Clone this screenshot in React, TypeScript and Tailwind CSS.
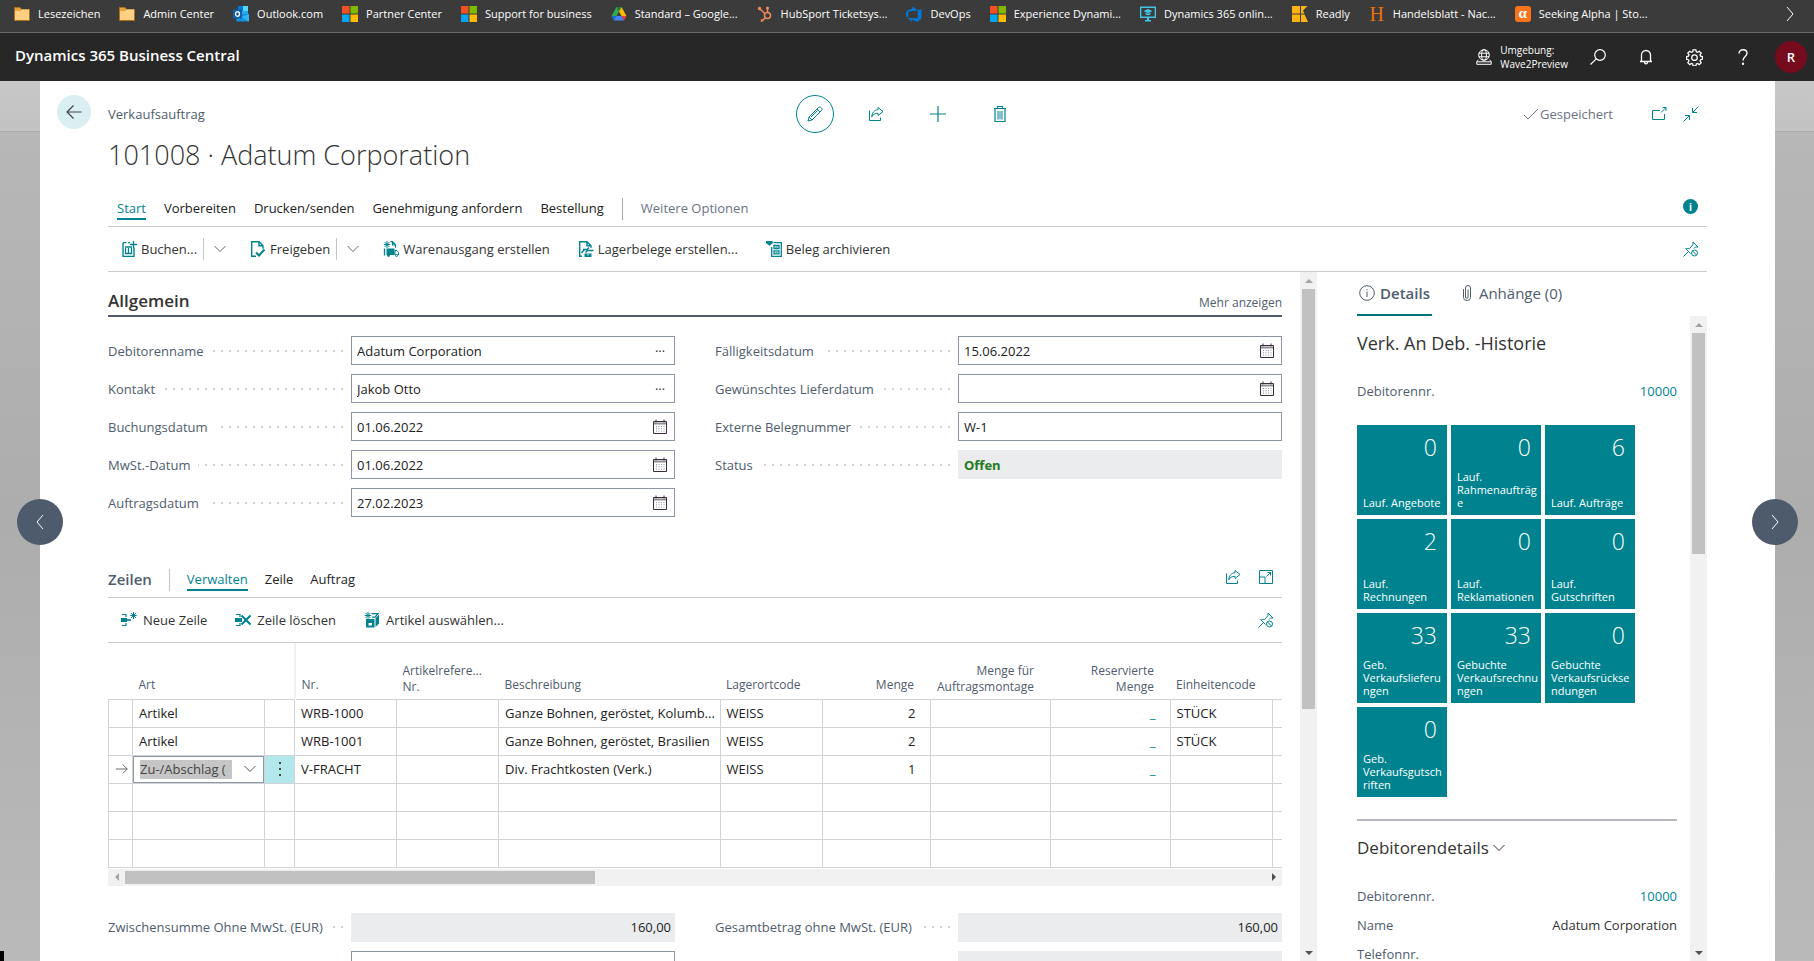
import React from "react";

type P = { className?: string };

function Svg({ className = "size-4", vb = 16, sw = 1, children }: { className?: string; vb?: number; sw?: number; children: React.ReactNode }) {
  return (
    <svg viewBox={`0 0 ${vb} ${vb}`} className={"shrink-0 " + className} fill="none" stroke="currentColor" strokeWidth={sw} aria-hidden="true">
      {children}
    </svg>
  );
}

/* ---------- bookmark icons ---------- */
const Folder = () => (
  <Svg>
    <path d="M.5 1.500h5.500l1.500 2h8v11H.5z" fill="#e8a33d" stroke="#a8741c" />
    <path d="M1 5h5l1.600-1.500H15V14H1z" fill="#ffd083" stroke="none" />
  </Svg>
);
const Outlook = () => (
  <Svg>
    <path d="M5 0h10v10H5z" fill="#28a8ea" stroke="none" />
    <path d="M10 0h5v5h-5z" fill="#50d9ff" stroke="none" />
    <path d="M5 0h5v5H5z" fill="#0078d4" stroke="none" />
    <path d="M3.500 8l12.500 0v7.500H3.500z" fill="#1490df" stroke="none" />
    <path d="M16 8v7.500L8 11z" fill="#32b6f2" stroke="none" />
    <path d="M0 3.500h9v9H0z" fill="#0f5ca8" stroke="none" />
    <ellipse cx="4.500" cy="8" rx="2" ry="2.300" stroke="#fff" strokeWidth="1.300" />
  </Svg>
);
const Ms = () => (
  <Svg>
    <g stroke="none">
      <path d="M0 0h7.500v7.500H0z" fill="#f25022" />
      <path d="M8.500 0H16v7.500H8.500z" fill="#7fba00" />
      <path d="M0 8.500h7.500V16H0z" fill="#00a4ef" />
      <path d="M8.500 8.500H16V16H8.500z" fill="#ffb900" />
    </g>
  </Svg>
);
const Drive = () => (
  <Svg>
    <g stroke="none">
      <path d="M5.500 1h5L8 5.500z" fill="#188038" />
      <path d="M5.500 1L.5 10l2.500 4.500 5-9z" fill="#34a853" />
      <path d="M10.500 1l5 9h-5L8 5.500z" fill="#fbbc04" />
      <path d="M3 14.500L5.500 10H.5z" fill="#1967d2" />
      <path d="M5.500 10h5l2.500 4.500H3z" fill="#4285f4" />
      <path d="M10.500 10h5L13 14.500z" fill="#ea4335" />
    </g>
  </Svg>
);
const Hub = () => (
  <Svg sw={1.5}>
    <g stroke="#f08a5d">
      <circle cx="10.500" cy="9.500" r="3" />
      <path d="M10.500 6.500V3M8 7.700L3 3M8.300 11.800L5.500 14.500" />
      <circle cx="2.500" cy="2.500" r="1" fill="#f08a5d" />
      <circle cx="10.500" cy="2" r=".8" fill="#f08a5d" />
      <circle cx="5" cy="14.600" r=".6" fill="#f08a5d" />
    </g>
  </Svg>
);
const DevOps = () => (
  <Svg>
    <path d="M15.500 3v9.500L11.500 16 5.500 13.600V16L2 11.800l9.700.8V4.200zM11.800 4.200L6.300.5v2.300L1.500 4.300 0 6.200v4.400l2.200.9V5.800z" fill="#0078d4" stroke="none" />
  </Svg>
);
const Monitor = () => (
  <Svg>
    <path d="M.7 1.200h14.600v10H.7z" stroke="#45c3e8" strokeWidth="1.400" />
    <path d="M8 3l4.500 2L8 7.200 3.500 5z" fill="#45c3e8" stroke="none" />
    <path d="M5.500 6.500v2c1.500 1 3.500 1 5 0v-2L8 7.700z" fill="#45c3e8" stroke="none" />
    <path d="M7 11h2v3H7zM5 14h6v1.500H5z" fill="#45c3e8" stroke="none" />
  </Svg>
);
const Readly = () => (
  <Svg>
    <path d="M0 0h8v7.500H0zM0 8.500h8V16H0zM9 0h6.500L11 4.500 12.500 7.500H9zM9 8.500h3.500L16 16H9z" fill="#fcb415" stroke="none" />
  </Svg>
);
const Handels = () => <span className="w-4 text-center font-['Liberation_Serif',serif] text-[20px] leading-4 text-[#e8730c]">H</span>;
const Alpha = () => <span className="flex size-4 items-center justify-center rounded-[3px] bg-[#f9731a] pb-0.5 font-['Liberation_Serif',serif] text-[15px] font-bold leading-4 text-white">α</span>;

/* ---------- app icons ---------- */
const ChevR = ({ className }: P) => <Svg className={className}><path d="M5 1l6 7-6 7" /></Svg>;
const ChevL = ({ className }: P) => <Svg className={className}><path d="M11 1L5 8l6 7" /></Svg>;
const ChevD = ({ className }: P) => <Svg className={className}><path d="M2.500 5L8 10.500 13.500 5" /></Svg>;
const ArrowL = ({ className }: P) => <Svg className={className} sw={1.2}><path d="M15.500 8H1M7.500 1.500L1 8l6.500 6.500" /></Svg>;
const ArrowR = ({ className }: P) => <Svg className={className}><path d="M1 8h13M9 3l5 5-5 5" /></Svg>;
const Pencil = ({ className }: P) => (
  <Svg className={className}><path d="M1 15l1-4L11.500 1.500c.7-.7 1.800-.7 2.500 0l.5.500c.7.700.7 1.800 0 2.500L5 14zM2 11l3 3M10 3l3 3M4 11l6.500-6.500" /></Svg>
);
const Share = ({ className }: P) => (
  <Svg className={className}><path d="M1.500 4.500v10h11v-3M10 1.500l5 4-5 4V7.300C7 7.200 5 8.300 3.700 11 4 6.500 6.500 4 10 3.800z" /></Svg>
);
const Plus = ({ className }: P) => <Svg className={className} sw={1.2}><path d="M8 0v16M0 8h16" /></Svg>;
const Trash = ({ className }: P) => (
  <Svg className={className}>
    <path d="M2 2.500h12M5.500 2.500v-2h5v2M3 2.500v13h10v-13" strokeWidth="1.200" />
    <path d="M5 5h6v8.500H5z" fill="#7fc1c5" stroke="none" />
  </Svg>
);
const Check = ({ className }: P) => <Svg className={className}><path d="M1 9l4 4L15 3" /></Svg>;
const PopOut = ({ className }: P) => <Svg className={className}><path d="M9 4.500H1.500v9h12V8M10 6.500l5-5M11.500 1.500H15V5" /></Svg>;
const Shrink = ({ className }: P) => <Svg className={className}><path d="M15.500.5l-6 6M9.500 2v4.500H14M.5 15.500l6-6M2 9.500h4.500V14" /></Svg>;
const Pin = ({ className }: P) => (
  <Svg className={className}>
    <path d="M.5 15.500l5-5M2.500 7.500l5 5M3 8c1.300-.7 2.400-.7 3.500-.3L10 3.500V1l5 5h-2.500L11 7.500" />
    <circle cx="11.500" cy="12" r="3" />
    <path d="M9.500 10l4 4" />
  </Svg>
);
const Expand = ({ className }: P) => <Svg className={className}><path d="M1.500 8V1.500h13v13H1.500V8H7v6.500M8.500 7.500l4-4M9.500 3.500h3v3" /></Svg>;
const Calendar = ({ className }: P) => (
  <Svg className={className}>
    <path d="M1.500 2.500h13v12h-13zM4 .5v3M12 .5v3" stroke="#3b2b3f" />
    <path d="M2 3.500h12v2H2z" fill="#8f8f93" stroke="none" />
    <path d="M4.500 7v6M7 7v6M9.500 7v6M12 7v6" stroke="#8d97a3" strokeDasharray="1 1.300" />
  </Svg>
);
const Star = () => <path d="M4 0v7M.8 3.500h6.400M1.600 1l4.800 5M6.400 1L1.600 6" strokeWidth="1" />;
const Post = () => (
  <Svg><path d="M2 2v13.400h11V6.500M2 1.600h3.500M7 1.600h2" strokeWidth="1.400" /><path d="M4.500 7v6M7.500 7v6M10.500 7v6M4 6h7M4 12.500h7M9 3.500h7M12.500 0v7" strokeWidth="1.300" /></Svg>
);
const Release = () => (
  <Svg><path d="M6 15.300H1.700V.7H9l4 4v3M9 .7v4h4" strokeWidth="1.400" /><path d="M6 11.500l3 3 5.500-6" strokeWidth="2" /></Svg>
);
const Shipment = () => (
  <Svg>
    <Star /><path d="M7.500.7h2l3 3v3M9.500 1v3h3" strokeWidth="1.200" /><path d="M1.500 7.500v7" strokeWidth="1.300" />
    <path d="M3.500 7.500h8v6.500h-8z" fill="currentColor" stroke="none" /><path d="M12 9.500h2l1.500 2V14H12z" />
    <circle cx="5.500" cy="14.500" r="1" fill="currentColor" /><circle cx="13.500" cy="14.500" r="1" fill="#fff" />
  </Svg>
);
const WhseDoc = () => (
  <Svg><path d="M4 15.300H1.700V.7H9l4 4v2M9 .7v4h4" strokeWidth="1.400" /><path d="M5 8.500h4l2-2M15.500 9.500h-6l-2 2M3.500 12l3-3.500" strokeWidth="1.400" /><path d="M6.500 12.500h7V16h-7z" fill="currentColor" stroke="none" /><path d="M10 13v1.500" stroke="#fff" /></Svg>
);
const Archive = () => (
  <Svg><path d="M0 .5h6.500M1 2l2.500 2L6 2z" strokeWidth="1.300" fill="currentColor" /><path d="M5.700 6v9.300h9.600V1.700H7.500M8 4.500h5v3H8zM8 9.800h5v3H8z" strokeWidth="1.300" /><path d="M9.500 6h2M9.500 11.300h2" /></Svg>
);
const NewLine = () => (
  <Svg><path d="M1 2.500h4v2.500M1 13.500h4v-2.500" strokeWidth="1.200" /><path d="M0 6h6v4H0z" fill="currentColor" stroke="none" /><path d="M6 8h4" strokeWidth="1.600" /><g transform="translate(8.500 0)"><Star /></g></Svg>
);
const DelLine = () => (
  <Svg><path d="M1 2.500h4v2.500M1 13.500h4v-2.500" strokeWidth="1.200" /><path d="M0 6h7v4H0z" fill="currentColor" stroke="none" /><path d="M6.500 3.500l9 9M15.500 3.500l-9 9" strokeWidth="2" /></Svg>
);
const PickItem = () => (
  <Svg>
    <path d="M2 7h8.500v8.500H2zM11.500 6L15 2.500v9L11.500 15z" fill="currentColor" stroke="none" />
    <path d="M7.500 1.700H14l-3 3.500H8" strokeWidth="1.300" /><path d="M4.500 11h3.500v2.500H4.500z" fill="#fff" stroke="none" /><Star />
  </Svg>
);
const Globe = ({ className }: P) => (
  <Svg className={className}><circle cx="8" cy="6" r="5.300" /><ellipse cx="8" cy="6" rx="2.400" ry="5.300" /><path d="M2.700 4.200h10.600M2.700 7.800h10.600M2.500 11L.8 12.500v2.800h14.400v-2.800L13.500 11M.8 12.800h14.400" /></Svg>
);
const Search = ({ className }: P) => <Svg className={className} sw={1.2}><circle cx="10" cy="6" r="5.300" /><path d="M6.200 9.800L.5 15.500" /></Svg>;
const Bell = ({ className }: P) => <Svg className={className} sw={1.3}><path d="M2 12.500h12M3.500 12.500V6a4.500 4.500 0 019 0v6.500M6.500 13c0 2.500 3 2.500 3 0" /></Svg>;
const Gear = ({ className }: P) => (
  <Svg className={className} sw={1.2}>
    <path d="M6.700.8h2.600l.4 1.900 1.200.5 1.600-1.100 1.800 1.800-1.100 1.600.5 1.200 1.700.4v2.600l-1.700.4-.5 1.200 1.100 1.600-1.800 1.800-1.600-1.100-1.200.5-.4 1.900H6.700l-.4-1.900-1.200-.5-1.600 1.100-1.800-1.800 1.100-1.600-.5-1.200-1.700-.4V7.100l1.700-.4.500-1.200-1.100-1.600 1.800-1.800 1.600 1.100 1.200-.5z" />
    <circle cx="8" cy="8.200" r="2.600" />
  </Svg>
);
const Question = ({ className }: P) => <Svg className={className} sw={1.4}><path d="M4 4.500C4 2 5.800.8 8 .8s4 1.400 4 3.500C12 7.500 8 7.500 8 11.500" /><circle cx="8" cy="14.800" r=".5" fill="currentColor" /></Svg>;
const InfoO = ({ className }: P) => <Svg className={className}><circle cx="8" cy="8" r="7.300" /><path d="M8 6.500V12M8 4v1.200" /></Svg>;
const Clip = ({ className }: P) => <Svg className={className}><path d="M4.500 4v8.500a3.500 3 0 007 0V3a2.500 2.500 0 00-5 0v9a1.300 1.300 0 002.600 0V4.500" /></Svg>;
const Tri = ({ className }: P) => <Svg className={className} vb={8}><path d="M0 6l4-4 4 4z" fill="currentColor" stroke="none" /></Svg>;

/* ---------- data ---------- */
const bookmarks: [React.ReactNode, string][] = [
  [<Folder />, "Lesezeichen"],
  [<Folder />, "Admin Center"],
  [<Outlook />, "Outlook.com"],
  [<Ms />, "Partner Center"],
  [<Ms />, "Support for business"],
  [<Drive />, "Standard – Google..."],
  [<Hub />, "HubSport Ticketsys..."],
  [<DevOps />, "DevOps"],
  [<Ms />, "Experience Dynami..."],
  [<Monitor />, "Dynamics 365 onlin..."],
  [<Readly />, "Readly"],
  [<Handels />, "Handelsblatt - Nac..."],
  [<Alpha />, "Seeking Alpha | Sto..."],
];

type Kind = "lookup" | "date" | "text" | "status" | "total";
type FieldDef = { id: string; label: string; value: string; kind: Kind };
const leftFields: FieldDef[] = [
  { id: "deb", label: "Debitorenname", value: "Adatum Corporation", kind: "lookup" },
  { id: "kon", label: "Kontakt", value: "Jakob Otto", kind: "lookup" },
  { id: "buch", label: "Buchungsdatum", value: "01.06.2022", kind: "date" },
  { id: "mwst", label: "MwSt.-Datum", value: "01.06.2022", kind: "date" },
  { id: "auf", label: "Auftragsdatum", value: "27.02.2023", kind: "date" },
];
const rightFields: FieldDef[] = [
  { id: "fael", label: "Fälligkeitsdatum", value: "15.06.2022", kind: "date" },
  { id: "lief", label: "Gewünschtes Lieferdatum", value: "", kind: "date" },
  { id: "ext", label: "Externe Belegnummer", value: "W-1", kind: "text" },
  { id: "stat", label: "Status", value: "Offen", kind: "status" },
];
const lines = [
  ["Artikel", "WRB-1000", "Ganze Bohnen, geröstet, Kolumb...", "WEISS", "2", "STÜCK"],
  ["Artikel", "WRB-1001", "Ganze Bohnen, geröstet, Brasilien", "WEISS", "2", "STÜCK"],
  ["Zu-/Abschlag (", "V-FRACHT", "Div. Frachtkosten (Verk.)", "WEISS", "1", ""],
  null,
  null,
  null,
];
const tiles: [string, string][] = [
  ["0", "Lauf. Angebote"],
  ["0", "Lauf.\nRahmenaufträg\ne"],
  ["6", "Lauf. Aufträge"],
  ["2", "Lauf.\nRechnungen"],
  ["0", "Lauf.\nReklamationen"],
  ["0", "Lauf.\nGutschriften"],
  ["33", "Geb.\nVerkaufslieferu\nngen"],
  ["33", "Gebuchte\nVerkaufsrechnu\nngen"],
  ["0", "Gebuchte\nVerkaufsrückse\nndungen"],
  ["0", "Geb.\nVerkaufsgutsch\nriften"],
];

/* ---------- parts ---------- */
function Field({ f }: { f: FieldDef }) {
  const filled = f.kind === "status" || f.kind === "total";
  return (
    <div className="flex h-[29px] items-center">
      <div className="flex w-[243px] shrink-0 items-center gap-2 pr-2">
        <label htmlFor={f.id} className="whitespace-nowrap text-[#505c6d]">{f.label}</label>
        <span className="h-0.5 flex-1 bg-[repeating-linear-gradient(to_left,#d4d4d4_0_2px,transparent_2px_8px)]" />
      </div>
      <div className={"flex h-full min-w-0 flex-1 items-center " + (filled ? "bg-[#ebecee]" : "border border-[#8e95a5]")}>
        <input
          id={f.id}
          defaultValue={f.value}
          readOnly={filled}
          className={
            "h-full w-full min-w-0 bg-transparent outline-none " +
            (f.kind === "status" ? "px-1.5 font-bold text-[#217a21]" : f.kind === "total" ? "px-1 text-right text-[#212121]" : "px-[5px] text-[#212121]")
          }
        />
        {f.kind === "lookup" && <button aria-label="Auswählen" className="w-7 shrink-0 text-center leading-4 text-[#333]">···</button>}
        {f.kind === "date" && (
          <button aria-label="Kalender" className="flex w-7 shrink-0 justify-center"><Calendar /></button>
        )}
      </div>
    </div>
  );
}

function Action({ icon, label, split, wide }: { icon: React.ReactNode; label: string; split?: boolean; wide?: boolean }) {
  return (
    <div className={"flex items-center " + (split ? "-mr-1.5" : "")}>
      <button className={"flex items-center whitespace-nowrap text-[#333] " + (wide ? "gap-1.5" : "gap-1")}>
        <span className="text-[#00838f]">{icon}</span>
        {label}
      </button>
      {split && (
        <button aria-label="Weitere Aktionen" className="ml-1.5 flex h-[22px] items-center border-l border-[#c4c4c4] pl-2 text-[#666]">
          <ChevD />
        </button>
      )}
    </div>
  );
}

function VScroll({ thumb }: { thumb: string }) {
  return (
    <div className="flex w-[17px] shrink-0 flex-col items-center bg-[#f1f1f1]">
      <div className="flex h-[17px] items-center text-[#a3a3a3]"><Tri className="size-2" /></div>
      <div className={"w-[13px] bg-[#c1c1c1] " + thumb} />
      <div className="mt-auto flex h-[17px] items-center text-[#505050]"><Tri className="size-2 rotate-180" /></div>
    </div>
  );
}

const Tab = ({ label, active }: { label: string; active?: boolean }) => (
  <button className={"whitespace-nowrap border-b-2 leading-5 " + (active ? "border-[#00838f] text-[#00838f]" : "border-transparent text-[#212121]")}>{label}</button>
);

const thBase = "px-1.5 align-bottom text-[12px] font-normal leading-4 text-[#505c6d] ";
const th = thBase + "pb-1.5 ";
const th2 = thBase + "pb-1 ";
const td = "h-7 overflow-hidden whitespace-nowrap border border-[#d2d2d6] py-0 pl-1.5 ";

export default function App() {
  return (
    <div className="flex h-screen flex-col overflow-hidden bg-white font-['Open_Sans','Noto_Sans',sans-serif] text-[13px] leading-5">
      {/* bookmarks bar */}
      <nav className="flex h-[33px] shrink-0 items-center justify-between border-b border-[#6b6b6b] bg-[#3b3b3b] pb-1 pl-3.5 pr-4 text-[11px] text-white">
        <div className="flex gap-[19px]">
          {bookmarks.map(([icon, label]) => (
            <a key={label} href="#" className="flex items-center gap-2 whitespace-nowrap">
              {icon}
              {label}
            </a>
          ))}
        </div>
        <button aria-label="Mehr Lesezeichen"><ChevR className="size-4" /></button>
      </nav>

      {/* app bar */}
      <header className="flex h-12 shrink-0 items-center bg-[#272727] pl-[15px] pr-[7px] text-white">
        <h1 className="flex-1 pb-1 text-[15px] font-semibold">Dynamics 365 Business Central</h1>
        <div className="flex items-center gap-2">
          <Globe />
          <p className="text-[10px] font-medium leading-[14px]">Umgebung:<br />Wave2Preview</p>
        </div>
        <div className="ml-[22px] flex items-center gap-8">
          <button aria-label="Suchen"><Search /></button>
          <button aria-label="Benachrichtigungen"><Bell /></button>
          <button aria-label="Einstellungen"><Gear className="size-[17px]" /></button>
          <button aria-label="Hilfe"><Question /></button>
          <button className="-ml-2 flex size-8 items-center justify-center rounded-full bg-[#750b1c] font-semibold">R</button>
        </div>
      </header>

      {/* backdrop */}
      <div className="relative min-h-0 flex-1 bg-[linear-gradient(to_bottom,#c6c7c6_0,#c1c2c1_50px,#adadad_50px,#adadad_51px,#b6b7b6_51px,#acadac_50%,#bababa_100%)] pl-10 pr-[39px]">
        <main className="flex h-full flex-col bg-white">
          {/* command row */}
          <div className="grid shrink-0 grid-cols-[1fr_auto_1fr] items-center pl-[17px] pr-[68px] pt-[14px]">
            <div className="flex items-center gap-[17px]">
              <button aria-label="Zurück" className="mb-1 flex size-[34px] items-center justify-center rounded-full bg-[#d9eff1] text-[#444]"><ArrowL /></button>
              <span className="text-[#505c6d]">Verkaufsauftrag</span>
            </div>
            <div className="ml-10 flex items-center gap-[46px] text-[#00838f]">
              <button aria-label="Bearbeiten" className="-mr-3 flex size-[38px] items-center justify-center rounded-full border border-[#00838f]"><Pencil /></button>
              <button aria-label="Teilen"><Share /></button>
              <button aria-label="Neu"><Plus /></button>
              <button aria-label="Löschen"><Trash /></button>
            </div>
            <div className="flex items-center justify-end text-[#00838f]">
              <span className="mr-[38px] flex items-center gap-px text-[#6b7380]"><Check />Gespeichert</span>
              <button aria-label="In neuem Fenster öffnen" className="mr-4"><PopOut /></button>
              <button aria-label="Verkleinern" className="mr-2"><Shrink /></button>
            </div>
          </div>

          <div className="flex min-h-0 flex-1 flex-col px-[68px]">
            <h2 className="mt-1 shrink-0 text-[27px] font-light leading-9 text-[#333]">101008 · Adatum Corporation</h2>

            <div className="mt-[25px] flex h-[29px] shrink-0 items-start gap-[18px] border-b border-[#c8cad0] pl-[9px]">
              <Tab label="Start" active />
              <Tab label="Vorbereiten" />
              <Tab label="Drucken/senden" />
              <Tab label="Genehmigung anfordern" />
              <Tab label="Bestellung" />
              <span className="h-[22px] w-px bg-[#a8a8a8]" />
              <button className="whitespace-nowrap leading-5 text-[#6b7380]">Weitere Optionen</button>
              <button aria-label="Info" className="ml-auto mr-[9px] mt-px flex size-[15px] items-center justify-center rounded-full bg-[#00838f] text-[10px] font-bold leading-none text-white">i</button>
            </div>

            <div className="flex h-[45px] shrink-0 items-center gap-7 border-b border-[#c8cad0] pl-[13px]">
              <Action icon={<Post />} label="Buchen..." split />
              <Action icon={<Release />} label="Freigeben" split />
              <Action icon={<Shipment />} label="Warenausgang erstellen" />
              <Action icon={<WhseDoc />} label="Lagerbelege erstellen..." />
              <Action icon={<Archive />} label="Beleg archivieren" />
              <button aria-label="Anheften" className="ml-auto mr-2 text-[#00838f]"><Pin /></button>
            </div>

            <div className="flex min-h-0 flex-1">
              {/* document */}
              <section className="min-w-0 flex-1 overflow-hidden pr-[18px]">
                <div className="flex h-[45px] items-end justify-between border-b-2 border-[#505c6d] pb-1">
                  <h3 className="text-[17px] font-semibold text-[#333]">Allgemein</h3>
                  <button className="text-[12px] leading-4 text-[#505c6d]">Mehr anzeigen</button>
                </div>
                <div className="mt-[19px] grid grid-cols-2 gap-x-10">
                  <div className="flex flex-col gap-[9px]">{leftFields.map((f) => <Field key={f.id} f={f} />)}</div>
                  <div className="flex flex-col gap-[9px]">{rightFields.map((f) => <Field key={f.id} f={f} />)}</div>
                </div>

                <div className="mt-[52px] flex h-[29px] items-start gap-[17px] border-b border-[#c8cad0]">
                  <h3 className="text-[15px] font-semibold text-[#505c6d]">Zeilen</h3>
                  <span className="h-[22px] w-px bg-[#c4c4c4]" />
                  <Tab label="Verwalten" active />
                  <Tab label="Zeile" />
                  <Tab label="Auftrag" />
                  <div className="ml-auto mr-2 flex gap-[17px] text-[#00838f]">
                    <button aria-label="Teilen"><Share /></button>
                    <button aria-label="Maximieren"><Expand /></button>
                  </div>
                </div>
                <div className="flex h-[45px] items-center gap-7 border-b border-[#c8cad0] pl-[13px]">
                  <Action icon={<NewLine />} label="Neue Zeile" wide />
                  <Action icon={<DelLine />} label="Zeile löschen" wide />
                  <Action icon={<PickItem />} label="Artikel auswählen..." wide />
                  <button aria-label="Anheften" className="ml-auto mr-2 text-[#00838f]"><Pin /></button>
                </div>

                <table className="w-full table-fixed border-collapse">
                  <colgroup>
                    <col className="w-6" />
                    <col className="w-[132px]" />
                    <col className="w-[30px]" />
                    <col className="w-[102px]" />
                    <col className="w-[102px]" />
                    <col />
                    <col className="w-[102px]" />
                    <col className="w-[108px]" />
                    <col className="w-[120px]" />
                    <col className="w-[120px]" />
                    <col className="w-[102px]" />
                    <col className="w-[10px]" />
                  </colgroup>
                  <thead>
                    <tr className="h-14 text-left">
                      <th className={th} />
                      <th className={th}>Art</th>
                      <th className={th + "border-r-2 border-r-[#f0f0f0]"} />
                      <th className={th}>Nr.</th>
                      <th className={th2}>Artikelrefere...<br />Nr.</th>
                      <th className={th}>Beschreibung</th>
                      <th className={th}>Lagerortcode</th>
                      <th className={th + "pr-4 text-right"}>Menge</th>
                      <th className={th2 + "pr-4 text-right"}>Menge für Auftragsmontage</th>
                      <th className={th2 + "pr-4 text-right"}>Reservierte<br />Menge</th>
                      <th className={th}>Einheitencode</th>
                      <th className={th} />
                    </tr>
                  </thead>
                  <tbody className="text-[#212121]">
                    {lines.map((l, i) => {
                      const active = i === 2;
                      return (
                        <tr key={i}>
                          <td className={td}>{active && <ArrowR className="size-3.5 text-[#555]" />}</td>
                          {active ? (
                            <td className="h-7 border border-[#d2d2d6] p-0">
                              <div className="flex h-[27px] items-center border border-[#8e95a5] pl-1.5">
                                <select aria-label="Art" className="h-[19px] w-[92px] appearance-none bg-[#c6c6c6] leading-[19px] text-[#444] outline-none">
                                  <option>{l![0]}</option>
                                </select>
                                <ChevD className="ml-2.5 size-4 text-[#555]" />
                              </div>
                            </td>
                          ) : (
                            <td className={td}>{l?.[0]}</td>
                          )}
                          <td className={"h-7 border border-[#d2d2d6] p-0 " + (active ? "bg-[#b2e7eb]" : "")}>
                            {active && (
                              <button aria-label="Zeilenmenü" className="mx-auto flex flex-col gap-1">
                                <i className="size-0.5 bg-[#444]" />
                                <i className="size-0.5 bg-[#444]" />
                                <i className="size-0.5 bg-[#444]" />
                              </button>
                            )}
                          </td>
                          <td className={td}>{l?.[1]}</td>
                          <td className={td} />
                          <td className={td + "pr-0"}>{l?.[2]}</td>
                          <td className={td}>{l?.[3]}</td>
                          <td className={td + "pr-3.5 text-right"}>{l?.[4]}</td>
                          <td className={td} />
                          <td className={td + "pr-3.5 text-right"}>{l && <a href="#" className="font-semibold text-[#00838f]">_</a>}</td>
                          <td className={td}>{l?.[5]}</td>
                          <td className={td + "border-r-0"} />
                        </tr>
                      );
                    })}
                  </tbody>
                </table>
                <div className="mt-px flex h-[17px] items-center bg-[#f1f1f1]">
                  <div className="flex w-[17px] justify-center text-[#a3a3a3]"><Tri className="size-2 -rotate-90" /></div>
                  <div className="h-[13px] w-2/5 bg-[#c1c1c1]" />
                  <div className="ml-auto flex w-[17px] justify-center text-[#505050]"><Tri className="size-2 rotate-90" /></div>
                </div>

                <div className="mt-[27px] grid grid-cols-2 gap-x-10 gap-y-[9px]">
                  <Field f={{ id: "zw", label: "Zwischensumme Ohne MwSt. (EUR)", value: "160,00", kind: "total" }} />
                  <Field f={{ id: "ges", label: "Gesamtbetrag ohne MwSt. (EUR)", value: "160,00", kind: "total" }} />
                  <div className="flex h-[29px] pl-[243px]"><input aria-label="Rechnungsrabatt" className="w-full border border-[#8e95a5]" /></div>
                  <div className="flex h-[29px] pl-[243px]"><input aria-label="MwSt.-Betrag" readOnly className="w-full bg-[#ebecee]" /></div>
                </div>
              </section>
              <VScroll thumb="h-[420px]" />

              {/* fact boxes */}
              <aside className="ml-10 flex w-[350px] shrink-0 flex-col overflow-hidden text-[#505c6d]">
                <div className="flex h-11 shrink-0 gap-[27px] text-[15px]">
                  <button className="flex items-center gap-[5px] border-b-2 border-[#00727a] pl-0.5 pr-0.5 font-semibold"><InfoO />Details</button>
                  <button className="flex items-center gap-1 pb-0.5"><Clip />Anhänge (0)</button>
                </div>
                <div className="flex min-h-0 flex-1">
                  <div className="min-w-0 flex-1 overflow-hidden pr-[13px]">
                    <h3 className="mt-[15px] text-[18px] font-medium leading-6 text-[#333]">Verk. An Deb. -Historie</h3>
                    <p className="mt-[26px] flex justify-between">Debitorennr.<a href="#" className="text-[#00838f]">10000</a></p>
                    <div className="mt-6 grid w-[278px] grid-cols-3 gap-1">
                      {tiles.map(([n, label]) => (
                        <button key={label} className="flex h-[90px] flex-col justify-between bg-[#00838f] px-1.5 pb-1.5 pt-2 text-left text-white">
                          <span className="w-full pr-1 text-right text-[23px] font-light leading-7">{n}</span>
                          <span className="whitespace-pre text-[11px] leading-[13px]">{label}</span>
                        </button>
                      ))}
                    </div>
                    <div className="mt-[22px] border-t-2 border-[#b6b9be] pt-[15px]">
                      <h3 className="flex items-center gap-0.5 text-[17px] font-medium leading-6 text-[#333]">Debitorendetails<ChevD className="size-4" /></h3>
                      <p className="mt-[26px] flex justify-between">Debitorennr.<a href="#" className="text-[#00838f]">10000</a></p>
                      <p className="mt-[9px] flex justify-between">Name<span className="text-[#333]">Adatum Corporation</span></p>
                      <p className="mt-[9px]">Telefonnr.</p>
                    </div>
                  </div>
                  <VScroll thumb="h-[221px]" />
                </div>
              </aside>
            </div>
          </div>
        </main>

        <button aria-label="Vorheriger" className="absolute left-[17px] top-[418px] flex size-[46px] items-center justify-center rounded-full bg-[#4e5b6c] text-white"><ChevL /></button>
        <button aria-label="Nächster" className="absolute right-4 top-[418px] flex size-[46px] items-center justify-center rounded-full bg-[#4e5b6c] text-white"><ChevR /></button>
        <div className="absolute bottom-0 left-0 h-2.5 w-1 bg-black" />
      </div>
    </div>
  );
}
